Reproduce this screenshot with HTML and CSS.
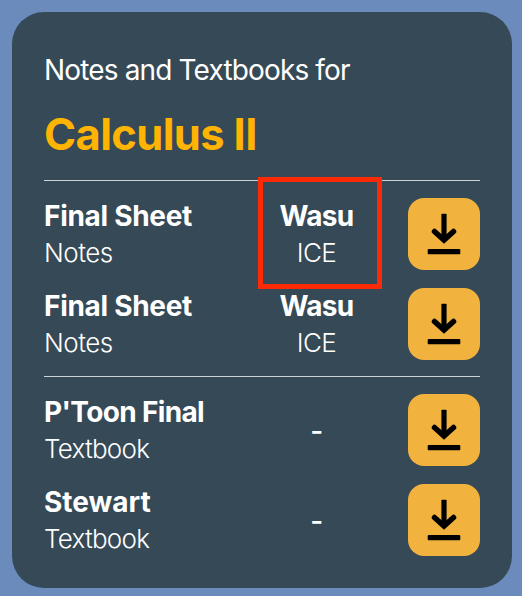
FILE: index.html
```html
<!DOCTYPE html>
<html lang="en">
<head>
<meta charset="utf-8">
<title>Notes and Textbooks</title>
<link rel="stylesheet" href="styles.css">
</head>
<body>
<svg class="defs" width="0" height="0"><symbol id="download" viewBox="0 0 72 72"><path d="M36 16.500v25" fill="none" stroke="#000" stroke-width="5.200"/><path d="M26.500 33.500 36 42l9.500-8.500" fill="none" stroke="#000" stroke-width="5.500" stroke-linecap="round"/><path d="M34.200 16.500h3.600" fill="none" stroke="#000" stroke-width="1.600" stroke-linecap="round"/><rect x="19.700" y="51" width="32.600" height="5.200" rx="1"/></symbol></svg>
<main class="card">
<p class="intro">Notes and Textbooks for</p>
<h1 class="title">Calculus II</h1>
<section class="group">
<article class="row"><div class="item"><strong>Final Sheet</strong><p>Notes</p></div><div class="author marked"><strong>Wasu</strong><p>ICE</p></div><button class="download" aria-label="Download"><svg><use href="#download"/></svg></button></article>
<article class="row"><div class="item"><strong>Final Sheet</strong><p>Notes</p></div><div class="author"><strong>Wasu</strong><p>ICE</p></div><button class="download" aria-label="Download"><svg><use href="#download"/></svg></button></article>
</section>
<section class="group">
<article class="row"><div class="item textbook"><strong class="tight">P'Toon Final</strong><p>Textbook</p></div><div class="author none">-</div><button class="download" aria-label="Download"><svg><use href="#download"/></svg></button></article>
<article class="row"><div class="item textbook"><strong class="loose">Stewart</strong><p>Textbook</p></div><div class="author none">-</div><button class="download" aria-label="Download"><svg><use href="#download"/></svg></button></article>
</section>
</main>
</body>
</html>
```
FILE: styles.css
```css
*, *::after { box-sizing: border-box; margin: 0; }
body { padding: 12px 10px 8px 12px; height: 596px; background: #6a8bbc; color: #fff; font-family: Inter, "Liberation Sans", sans-serif; overflow: hidden; }
.defs { position: absolute; }
.card { height: 576px; padding: 40px 32px; border-radius: 32px; background: #364956; }
.intro { font-size: 28px; line-height: 37px; letter-spacing: -.85px; white-space: nowrap; }
.title { height: 91px; padding-top: 19px; font-size: 43.500px; line-height: 52px; color: #ffb302; font-weight: 700; letter-spacing: -.65px; }
.group { display: flex; flex-direction: column; gap: 18px; height: 196px; padding-top: 17px; border-top: 1px solid #cdd2d5; }
.row { display: grid; grid-template-columns: 213px 119px 32px 72px; height: 72px; }
.download { grid-column: 4; width: 72px; height: 72px; padding: 0; border: 0; border-radius: 16px; background: #f2b33e; }
.download svg { display: block; width: 72px; height: 72px; }
.item, .author { font-size: 26px; line-height: 36px; white-space: nowrap; font-weight: 350; letter-spacing: -.5px; }
.textbook p { letter-spacing: -.75px; }
.row strong { display: block; font-size: 28px; line-height: 37px; font-weight: 700; letter-spacing: -.3px; }
.row .tight { letter-spacing: -.65px; }
.row .loose { letter-spacing: 0; }
.author { position: relative; text-align: center; }
.author strong { letter-spacing: -.7px; }
.marked::after { content: ""; position: absolute; left: .5px; top: -21.500px; width: 124px; height: 112.500px; border: 5px solid #fd2a05; }
.row .none { font-size: 28px; font-weight: 500; line-height: 74px; }
```
